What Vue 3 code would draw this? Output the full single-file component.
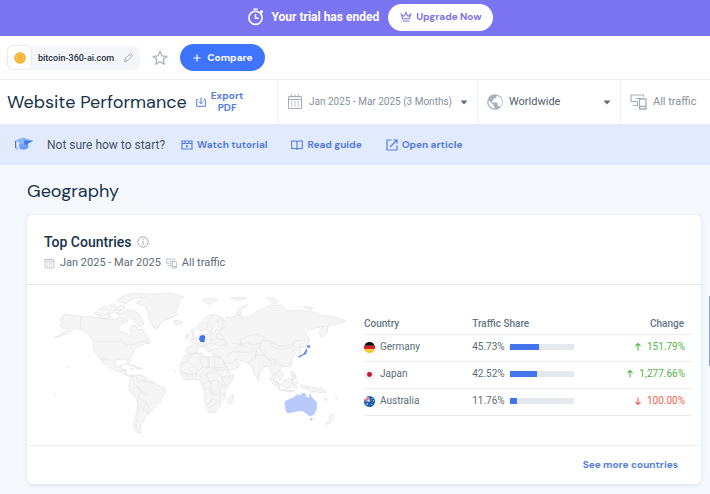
<script setup>
import { ref } from 'vue'

const region = ref('Worldwide')

const countries = [
  { name: 'Germany', flag: 'de', share: 45.73, change: '151.79%', up: true },
  { name: 'Japan', flag: 'jp', share: 42.52, change: '1,277.66%', up: true },
  { name: 'Australia', flag: 'au', share: 11.76, change: '100.00%', up: false },
]
</script>

<template>
  <div class="page">
    <!-- Shared icon shapes -->
    <svg class="sprite" aria-hidden="true">
      <symbol id="calendar" viewBox="0 0 16 16">
        <path d="M1.500 2.500h13v12h-13zM1.500 5.500h13M4.500 .5v3M11.500 .5v3M8 .5v3" fill="none" stroke="currentColor" />
        <path d="M4 8h1.500M7.250 8h1.500M10.500 8H12M4 10h1.500M7.250 10h1.500M10.500 10H12M4 12h1.500M7.250 12h1.500M10.500 12H12" stroke="currentColor" stroke-width="1" />
      </symbol>
      <symbol id="devices" viewBox="0 0 17 16">
        <path d="M13.500 3V1H1v6.500h6.500M7.500 7.500v3.500M2.500 11.500h5.500M6 4.500h6.500" fill="none" stroke="currentColor" stroke-width="1.200" />
        <path d="M9.500 5h6.500v10H9.500zM9.500 12.500h6.500" fill="none" stroke="currentColor" stroke-width="1.300" />
      </symbol>
      <symbol id="caret" viewBox="0 0 8 5">
        <path d="M.5.5h7L4 4.500z" fill="currentColor" />
      </symbol>
    </svg>

    <div class="banner">
      <svg class="timer" viewBox="0 0 18 18" aria-hidden="true">
        <g fill="none" stroke="#fff" stroke-width="1.600">
          <circle cx="8.500" cy="9.800" r="6.600" />
          <path d="M8.500 6v4.200h3.200M6.300 1.300h4.400M13.300 3.300l2 2" />
        </g>
        <circle cx="14.600" cy="3.600" r="1.300" fill="#fff" />
      </svg>
      <span class="banner-text">Your trial has ended</span>
      <button class="upgrade" type="button">
        <svg viewBox="0 0 12 12" aria-hidden="true">
          <path d="M2.600 7.800L1.500 3.700l2.500 1.600L6 2.200l2 3.100 2.500-1.600-1.100 4.100zM2.500 10h7" fill="none" stroke="currentColor" stroke-width="1.100" stroke-linejoin="round" />
          <circle cx="6" cy="1.400" r=".8" fill="currentColor" />
          <circle cx="1.100" cy="3" r=".7" fill="currentColor" />
          <circle cx="10.900" cy="3" r=".7" fill="currentColor" />
        </svg>
        Upgrade Now
      </button>
    </div>

    <header class="sitebar">
      <div class="site">
        <span class="favicon">
          <svg viewBox="0 0 12 12" aria-hidden="true">
            <circle cx="6" cy="6" r="5.800" fill="#f4ad2e" />
            <circle cx="6" cy="6" r="4.400" fill="#fbc44d" />
            <path d="M4.500 3.500h2.200q1.200 0 1.200 1.200T6.700 5.900H4.500h2.400q1.300 0 1.300 1.300T6.900 8.500H4.500z" fill="none" stroke="#f0a62e" stroke-width=".8" />
          </svg>
        </span>
        <span class="domain">bitcoin-360-ai.com</span>
        <button class="plain" type="button" aria-label="Edit website">
          <svg class="pencil" viewBox="0 0 12 12" aria-hidden="true">
            <path d="M1.500 10.500l.6-2.800 6-6 2.200 2.200-6 6zM7 2.800L9.200 5M2.100 7.700l2.200 2.200" fill="none" stroke="#a9b0b8" />
          </svg>
        </button>
      </div>
      <button class="plain" type="button" aria-label="Add to favorites">
        <svg class="star" viewBox="0 0 16 16" aria-hidden="true">
          <path d="M8 1.300l2 4.500 4.900.5-3.700 3.200 1.100 4.800L8 11.800l-4.300 2.500 1.100-4.800L1.100 6.300 6 5.800z" fill="none" stroke="#a6afb8" stroke-width="1.200" stroke-linejoin="round" />
        </svg>
      </button>
      <button class="compare" type="button">
        <svg viewBox="0 0 8 8" aria-hidden="true"><path d="M4 .5v7M.5 4h7" stroke="#fff" stroke-width="1.200" /></svg>
        Compare
      </button>
    </header>

    <div class="toolbar">
      <div class="title-cell">
        <h1>Website Performance</h1>
        <button class="export" type="button">
          <svg viewBox="0 0 10 10" aria-hidden="true">
            <path d="M2 2.500H.7v6.800h8.600V2.500H8M5 .5v6M3 4.700l2 2 2-2" fill="none" stroke="currentColor" />
          </svg>
          <span>Export<br>PDF</span>
        </button>
      </div>
      <button class="cell date" type="button">
        <svg class="icon16"><use href="#calendar" /></svg>
        <span>Jan 2025 - Mar 2025 (3 Months)</span>
        <svg class="caret"><use href="#caret" /></svg>
      </button>
      <label class="cell region">
        <svg class="icon16" viewBox="0 0 16 16" aria-hidden="true">
          <circle cx="8" cy="8" r="7.800" fill="#a9b2bd" />
          <path d="M1.800 6.400l4.700 4.500v1l1 1V14.500A6.500 6.500 0 0 1 1.800 6.400zM9.500 1.800v1.400L8.300 4.400H6.500v1.800L5.200 7v1.500h4.500l1 1v2.400h1.500l.9 1A6.500 6.500 0 0 0 11.200 2.300z" fill="#fff" />
        </svg>
        <select v-model="region" aria-label="Country">
          <option>Worldwide</option>
        </select>
        <svg class="caret"><use href="#caret" /></svg>
      </label>
      <div class="cell traffic">
        <svg class="icon16 wide"><use href="#devices" /></svg>
        <span>All traffic</span>
      </div>
    </div>

    <div class="help">
      <svg class="cap" viewBox="0 0 20 15" aria-hidden="true">
        <path d="M5 6.500l9-1 .5 5q-4 4-9 1z" fill="#6f9df8" />
        <path d="M1 3.500L9 .5l10 3.300-8.500 4.700z" fill="#8fb3fa" />
        <path d="M10 3.500l9 .3-8.500 4.700z" fill="#4478e8" />
        <path d="M1 3.500l1.200 1v7L1 11z" fill="#4478e8" />
        <path d="M2.200 9l2 1-.5 4-1.500-1.500z" fill="#a9c6fc" />
      </svg>
      <span class="help-title">Not sure how to start?</span>
      <nav>
        <a href="#tutorial">
          <svg viewBox="0 0 12 12" aria-hidden="true"><path d="M1 2h10v8H1zM1 4.500h10M4 2v2.500M8 2v2.500" fill="none" stroke="currentColor" stroke-width="1.200" /><path d="M5 5.800l2.500 1.500L5 8.800z" fill="currentColor" /></svg>
          Watch tutorial
        </a>
        <a href="#guide">
          <svg viewBox="0 0 12 12" aria-hidden="true"><path d="M6 3Q5.500 2 4.500 2H.7v7.500H5L6 10.300 7 9.500h4.300V2H7.500Q6.500 2 6 3zv7" fill="none" stroke="currentColor" stroke-width="1.100" /></svg>
          Read guide
        </a>
        <a href="#article">
          <svg viewBox="0 0 12 12" aria-hidden="true"><path d="M5.500 1H1v10h10V6.500M7.500 1H11v3.500M11 1L4 8" fill="none" stroke="currentColor" stroke-width="1.200" /></svg>
          Open article
        </a>
      </nav>
    </div>

    <main>
      <h2>Geography</h2>
      <section class="card">
        <div class="card-head">
          <h3>
            Top Countries
            <svg viewBox="0 0 12 12" aria-label="Info" role="img"><circle cx="6" cy="6" r="5.200" fill="none" stroke="#a6afb8" /><path d="M6 5.300v3.400M6 3v1.200" stroke="#a6afb8" stroke-width="1.100" /></svg>
          </h3>
          <p>
            <svg class="icon11"><use href="#calendar" /></svg>
            <span>Jan 2025 - Mar 2025</span>
            <svg class="icon11"><use href="#devices" /></svg>
            <span>All traffic</span>
          </p>
        </div>

        <div class="card-body">
          <svg class="map" viewBox="0 0 945 465" role="img" aria-label="World map of traffic share">
            <g class="land">
              <!-- North America -->
              <path d="M122 94L74 88 66 94 70 100 58 102 62 110 72 112 60 120 66 130 84 130 72 142 56 152 42 158 62 154 78 146 94 138 104 130 122 132 134 138 146 150 156 162 160 170 160 190 166 204 178 216 188 232 196 242 188 224 194 224 202 238 210 248 226 256 242 260 256 270 270 276 284 276 280 270 268 272 258 266 258 254 246 252 240 246 250 238 238 242 228 248 224 236 228 226 248 222 260 224 266 232 272 228 268 218 278 208 282 196 292 186 306 180 316 176 330 172 318 166 326 160 316 148 306 132 296 136 290 124 276 120 270 130 274 142 268 154 260 146 240 138 234 128 244 116 258 110 250 100 238 98 226 102 200 102 178 98 150 94z" />
              <path d="M162 84l10-4 12 4-8 8zM176 94l14-8 18 2 6 8-14 6-20-2zM176 72l16-6 12 4-10 8zM200 78l14-6 14 4-8 8-16 2zM204 62l14-6 10 6-12 6zM228 66l20-6 8 8-16 10-14-4zM230 48l18-14 26-8 30-2 12 4-18 10-26 6-12 12-14-4zM226 84l14-4 10 8-12 6zM252 78l20-4 18 8 16 20 6 16-12 6-14-10-8-14-18-6-10-8zM246 100l14-2 4 12-12 2zM322 164l10 4-2 8-12-2z" />
              <path d="M290 56L300 42 324 28 352 26 392 24 432 36 418 44 416 66 406 84 414 88 392 98 374 106 362 116 352 132 342 128 332 112 326 96 322 74 312 62z" />
              <path d="M400 108l12-2 16 4-6 8-14 2z" />
              <path d="M254 236l12-2 14 6 10 6-14-2-12-6zM286 248l16-2 8 5-18 2zM272 250l8 2-6 2z" />
              <!-- South America -->
              <path d="M274 278L288 270 300 270 316 276 324 286 344 292 350 300 374 308 376 320 366 336 364 350 348 358 340 372 328 386 316 394 312 406 304 412 300 430 304 444 290 442 282 430 282 410 288 388 292 364 292 344 278 330 268 312 266 300z" />
              <!-- Africa -->
              <path d="M432 214L448 208 476 204 486 204 488 214 508 216 524 214 548 220 552 234 564 256 572 272 582 268 578 284 564 300 556 316 556 336 544 352 538 366 526 380 508 384 502 370 494 348 494 326 488 308 486 294 478 286 458 282 438 286 424 272 420 256 422 238z" />
              <path d="M578 328l4 6-8 22-8 2-2-12z" />
              <!-- Eurasia -->
              <path d="M438 204L440 186 456 184 456 172 450 166 466 162 476 154 480 146 490 148 510 148 524 144 528 132 540 134 556 128 540 130 530 124 534 110 526 112 520 128 516 142 508 144 498 134 484 138 472 132 474 118 486 112 492 100 504 92 520 88 540 94 550 100 548 110 556 104 560 96 574 98 592 90 610 96 598 98 602 104 616 98 632 92 652 78 690 62 722 60 744 78 776 76 812 78 846 92 884 96 918 108 890 116 864 122 862 142 846 158 838 146 840 134 852 124 828 128 804 136 798 148 808 160 804 178 790 188 778 184 784 200 776 204 770 194 756 196 768 206 756 218 756 234 744 244 724 246 720 256 732 270 720 286 712 272 702 264 712 288 722 300 704 288 696 270 688 244 674 246 660 260 656 278 644 270 636 244 620 234 606 228 586 222 602 238 590 248 566 258 558 244 548 224 536 214 518 210 510 198 516 192 538 192 540 182 522 180 512 186 506 202 494 190 480 184 470 190 474 202 456 206z" />
              <path d="M452 136l10-4-2 14 10 12-16 6 4-14zM438 150l10-2-2 12-10 2z" />
              <path d="M588 86l10-16 26-12-20 18 0 14zM488 44l20-4 24 4-14 6-8 8-14-4zM570 40l30-4 22 4-26 6zM680 40l18-2 16 14-12 4zM790 66l30 2-6 6z" />
              <path d="M652 274l6 6-4 8zM690 278l16 12 14 16-4 4-18-14zM714 312l24 2 26 4-24 2zM724 300l8-14 20-6 6 8-6 20-16 2zM758 294l16-6-8 12 6 8-10 2zM754 256l10 6-4 12 6 8-8 4zM768 280l-6-10 6 2zM782 300l18 4 34 6 14 14-22-4-14 2-12-10-16-4zM748 234l6 4-4 8zM838 306l12 8 10 8-8 0zM852 334l10 10-6 2zM886 336l6 2-2 6zM872 386l12 8-14 20-14 4 12-14z" />
              <path d="M78 242l8 6-2 2zM42 328l5 2-3 2zM402 256l5 2-4 3z" />
            </g>
            <g class="borders">
              <path d="M122 94V132M160 169H246L262 180 282 178 298 170 316 168M178 216L202 222 220 230M240 244l6 10 12 6M276 280l12 22 14 16-6 22M288 272l6 20 14-6 10 4M294 340l22 10 12 20-6 12M292 344l6 20-6 32-4 30 8 14M278 312l16-8 8 16 18 10M318 350l-8 22 18 14M316 276l-6 14 34 4" />
              <path d="M454 208l-12 22-20 6M442 228l32 26-6 14h-24l-18-10M486 204l-6 18 8 26-14 8M488 214l16 6v26l-16 2M508 214v32l-20 14-8 24M524 214v34h30M504 246l30 10 24-4M424 268l18-4 2 20M456 264v20M468 260v24M484 282l18-18 26-6 18 18 28 0M500 264l6 24-18 10M506 290l26-6 14 16-10 22 20 6M492 310l18 2 10 16-8 26-16 4M512 290v40M534 286v24l-20 18M520 328l22 2-6 28M502 370l18-8 12-12-14-10-16 16M546 300l16 2M544 276l12 24" />
              <path d="M510 148l2 26-30 10M458 172l20 8M486 184l20 2M530 146l-2 14-18 6M528 160l24 4 10 12-20 4M512 174l18 2M530 146l14 4 12 12M520 88l-16 24-4 22M540 94l-6 18M550 100l0 26-14 18M576 174l26 4-2-14 26-12 28-4 20 8-10 18-26 6-20-8-24 12M600 178l20 8 24 6 18-8M582 186l20 16 26 0 22-6-4 16-20 22M602 202l-24-2-18 12 10 10M650 196l-4 30M664 166l26 2 28 16 32-2 14-14 18-2M664 168l-4 22 20 26 10 8M690 168l8 18 28 8 30-8 8-16M644 212l22-4 24 18 14-4 14 20 16-2M674 246l-6-16M690 226l6 18M704 224l2 20M720 256l-10 8M552 232l24 4 10-12M572 254l26-8M804 300l2 16" />
            </g>
            <path class="de" d="M480 152l10-2 6 4-2 10 0 8-12-1-5-8z" />
            <path class="jp" d="M800 182l8-2 4 6-8 4zM800 190l2 6-4 12-12 4-8 6-4-3 8-5 8-3z" />
            <path class="au" d="M734 354L736 348 760 338 766 332 776 328 780 332 788 324 798 328 796 334 806 340 810 326 816 338 830 352 830 372 822 388 812 394 804 390 796 384 788 378 772 378 758 382 742 384 738 378z" />
            <path class="au" d="M810 400l8 0-3 7-4-2z" />
          </svg>

          <table>
            <thead>
              <tr><th scope="col">Country</th><th scope="col">Traffic Share</th><th scope="col" class="change">Change</th></tr>
            </thead>
            <tbody>
              <tr v-for="c in countries" :key="c.name">
                <td>
                  <div class="country">
                    <svg v-if="c.flag === 'de'" class="flag" viewBox="0 0 12 12" aria-hidden="true">
                      <path d="M.3 4h11.400a6 6 0 0 1 0 4H.3a6 6 0 0 1 0-4z" fill="#dd1f26" /><path d="M.3 4a6 6 0 0 1 11.400 0z" fill="#111" /><path d="M.3 8a6 6 0 0 0 11.400 0z" fill="#fbc928" />
                    </svg>
                    <svg v-else-if="c.flag === 'jp'" class="flag" viewBox="0 0 12 12" aria-hidden="true">
                      <circle cx="6" cy="6" r="5.800" fill="#f3f3f5" /><circle cx="6" cy="6" r="2.700" fill="#c8102e" />
                    </svg>
                    <svg v-else class="flag" viewBox="0 0 12 12" aria-hidden="true">
                      <circle cx="6" cy="6" r="6" fill="#1f5cac" />
                      <path d="M.2 6A6 6 0 0 1 6 0v6z" fill="#6d83bb" />
                      <path d="M3.500 1v5M.5 3.500H6M1.500 1.500L6 6" stroke="#fff" stroke-width="1.500" />
                      <path d="M3.500 1v5M.5 3.500H6" stroke="#d9344b" stroke-width=".8" />
                      <g fill="#fff"><circle cx="3.500" cy="8.700" r=".9" /><circle cx="8.700" cy="2.500" r=".6" /><circle cx="8.500" cy="9.300" r=".6" /><circle cx="10.200" cy="5.300" r=".6" /><circle cx="7.500" cy="5.500" r=".5" /></g>
                    </svg>
                    {{ c.name }}
                  </div>
                </td>
                <td>
                  <div class="share">
                    <span>{{ c.share.toFixed(2) }}%</span>
                    <span class="track"><span class="fill" :style="{ width: c.share + '%' }"></span></span>
                  </div>
                </td>
                <td>
                  <div class="delta" :class="c.up ? 'up' : 'down'">
                    <svg viewBox="0 0 8 10" aria-hidden="true">
                      <path v-if="c.up" d="M4 8.500V1.500M1.500 4L4 1.500 6.500 4" fill="none" stroke="currentColor" stroke-width="1.100" />
                      <path v-else d="M4 1.500v7M1.500 6L4 8.500 6.500 6" fill="none" stroke="currentColor" stroke-width="1.100" />
                    </svg>
                    {{ c.change }}
                  </div>
                </td>
              </tr>
            </tbody>
          </table>
        </div>

        <div class="card-foot"><a href="#countries">See more countries</a></div>
      </section>
    </main>
    <div class="side-tab"></div>
  </div>
</template>

<style>
body {
  background: #f5f8fd;
}
</style>

<style scoped>
.page {
  position: relative;
  font-family: Roboto, "Liberation Sans", sans-serif;
  font-size: 11px;
  line-height: 16px;
  color: #5c6b77;
  overflow: hidden;
}
.sprite {
  display: none;
}
svg {
  display: block;
  flex: none;
}
h1, h2, h3, p {
  margin: 0;
}
button, select {
  font: inherit;
  border: 0;
  cursor: pointer;
}
a {
  text-decoration: none;
}
h1, h2, .upgrade, .compare, .export, nav, .card-foot {
  font-family: "DM Sans", Inter, sans-serif;
}
.plain {
  padding: 0;
  background: none;
}

.banner {
  display: flex;
  align-items: center;
  justify-content: center;
  height: 36px;
  padding-bottom: 2px;
  padding-left: 30px;
  box-sizing: border-box;
  background: #7b74f1;
  color: #fff;
}
.timer {
  width: 18px;
  height: 18px;
  margin-right: 7px;
}
.banner-text {
  font-size: 12px;
  font-weight: 700;
  margin-right: 9px;
}
.upgrade {
  display: flex;
  align-items: center;
  gap: 4px;
  height: 27px;
  padding: 0 12px;
  border-radius: 14px;
  background: #fff;
  color: #7b74e0;
  font-size: 10px;
  font-weight: 700;
}
.upgrade svg {
  width: 12px;
  height: 12px;
}

.sitebar {
  display: flex;
  align-items: center;
  gap: 12px;
  height: 44px;
  padding: 0 7px;
  box-sizing: border-box;
  background: #fff;
  border-bottom: 1px solid #eceef1;
}
.site {
  display: flex;
  align-items: center;
  height: 24px;
  padding-right: 6px;
  border-radius: 6px;
  background: #f5f6f9;
}
.favicon {
  display: grid;
  place-items: center;
  width: 23px;
  height: 23px;
  margin-right: 6px;
  border: 1px solid #e8eaee;
  border-radius: 6px;
  background: #fff;
}
.favicon svg {
  width: 12px;
  height: 12px;
}
.domain {
  margin-right: 9px;
  font-size: 9px;
  color: #1d3143;
  font-weight: 500;
}
.pencil {
  width: 11px;
  height: 11px;
}
.star {
  width: 16px;
  height: 16px;
}
.compare {
  display: flex;
  align-items: center;
  gap: 6px;
  height: 27px;
  padding: 0 12px 0 13px;
  border-radius: 14px;
  background: #3e74fe;
  color: #fff;
  font-size: 10px;
  font-weight: 700;
}
.compare svg {
  width: 8px;
  height: 8px;
}

.toolbar {
  display: grid;
  grid-template-columns: 277fr 200fr 143fr 90fr;
  height: 44px;
  background: #fff;
}
.title-cell {
  display: flex;
  align-items: center;
  gap: 9px;
  padding-left: 7px;
  white-space: nowrap;
}
h1 {
  font-size: 18px;
  line-height: 24px;
  font-weight: 400;
  color: #17324a;
}
.export {
  display: flex;
  align-items: center;
  gap: 5px;
  padding: 0;
  background: none;
  color: #557ce0;
  font-size: 10px;
  line-height: 12px;
  font-weight: 700;
}
.export svg {
  width: 10px;
  height: 10px;
}
.cell {
  display: flex;
  align-items: center;
  gap: 6px;
  min-width: 0;
  padding: 0 9px;
  border-left: 1px solid #eceef1;
  background: none;
  color: #84919b;
  white-space: nowrap;
}
.icon16 {
  width: 16px;
  height: 16px;
  color: #a5afba;
}
.wide {
  width: 17px;
}
.caret {
  width: 8px;
  height: 5px;
  color: #5c6b77;
}
.date {
  font-size: 10px;
}
.date span {
  flex: 1;
  text-align: left;
}
.region {
  color: #4d5d6a;
}
select {
  flex: 1;
  min-width: 0;
  padding: 0;
  appearance: none;
  background: none;
  color: inherit;
}

.help {
  display: flex;
  align-items: center;
  height: 41px;
  padding: 0 14px;
  box-sizing: border-box;
  background: #e2eafd;
}
.cap {
  width: 20px;
  height: 15px;
  margin-right: 13px;
}
.help-title {
  margin-right: 16px;
  font-size: 12px;
  color: #42566a;
}
nav {
  display: flex;
  gap: 24px;
}
nav a {
  display: flex;
  align-items: center;
  gap: 4px;
  color: #557ce0;
  font-size: 10px;
  font-weight: 700;
}
nav svg {
  width: 12px;
  height: 12px;
}

main {
  padding: 14px 9px 10px 27px;
}
h2 {
  font-size: 18px;
  line-height: 24px;
  font-weight: 400;
  color: #17324a;
}
.card {
  margin-top: 12px;
  border-radius: 5px;
  background: #fff;
  box-shadow: 0 1px 4px #dbe2ec;
}
.card-head {
  padding: 18px 17px 13px;
  border-bottom: 1px solid #e5e8ec;
}
h3 {
  display: flex;
  align-items: center;
  gap: 6px;
  font-size: 14px;
  line-height: 18px;
  font-weight: 500;
  color: #17324a;
}
h3 svg {
  width: 12px;
  height: 12px;
}
.card-head p {
  display: flex;
  align-items: center;
  gap: 5px;
  margin-top: 4px;
}
.icon11 {
  width: 11px;
  height: 11px;
  color: #aab3bc;
}
.card-body {
  display: grid;
  grid-template-columns: minmax(0, 315fr) minmax(0, 328fr);
  gap: 9px;
  padding: 0 9px 5px 13px;
  align-items: start;
}
.map {
  width: 100%;
}
.land {
  fill: #f5f5f6;
  stroke: #e2e3e5;
  stroke-width: 2;
  stroke-linejoin: round;
}
.borders {
  fill: none;
  stroke: #e5e6e8;
  stroke-width: 2;
  stroke-linejoin: round;
}
.de {
  fill: #4274ea;
}
.jp {
  fill: #6689ec;
}
.au {
  fill: #b9c9fb;
  stroke: #b1c1f4;
}

table {
  width: 100%;
  margin-top: 28px;
  border-collapse: collapse;
  table-layout: fixed;
}
th, td {
  padding: 0;
  border-bottom: 1px solid #e8ebee;
  text-align: left;
}
th {
  height: 21px;
  font-size: 10px;
  font-weight: 500;
  color: #657582;
}
td {
  height: 22px;
  padding: 1px 0 3px;
  font-size: 10px;
}
th:first-child {
  width: 33%;
}
th:last-child {
  width: 30%;
}
.change {
  padding-right: 8px;
  text-align: right;
}
.country, .share, .delta {
  display: flex;
  align-items: center;
  gap: 5px;
}
.flag {
  width: 11px;
  height: 11px;
}
.track {
  width: 64px;
  height: 6px;
  background: #e5e8ec;
}
.fill {
  display: block;
  height: 100%;
  background: #4274ee;
}
.delta {
  justify-content: flex-end;
  padding-right: 7px;
}
.delta svg {
  width: 8px;
  height: 10px;
}
.up {
  color: #56b347;
}
.down {
  color: #ef6350;
}
.card-foot {
  display: flex;
  justify-content: flex-end;
  padding: 11px 23px;
  border-top: 1px solid #eceef1;
}
.card-foot a {
  color: #557ce0;
  font-size: 10px;
  font-weight: 700;
}
.side-tab {
  position: absolute;
  top: 296px;
  right: 0;
  width: 1px;
  height: 70px;
  background: #7da0f5;
}
</style>
